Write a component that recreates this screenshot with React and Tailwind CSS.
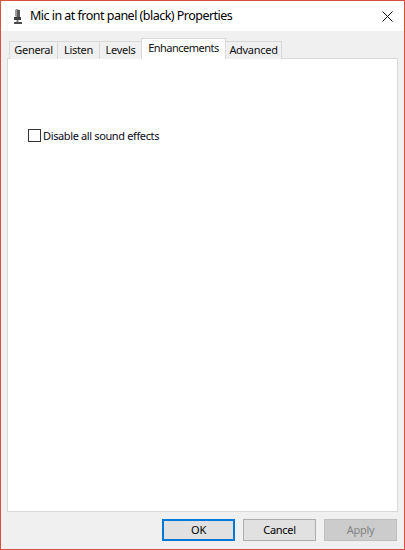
const tabs = [
  { label: 'General', width: 'w-[49px]' },
  { label: 'Listen', width: 'w-[43px]' },
  { label: 'Levels', width: 'w-[43px]' },
];

const MicIcon = () => (
  <svg width="10" height="15" viewBox="0 0 10 15" className="block">
    <rect x="2" y="0" width="4" height="8" rx="1.5" fill="#9a9a9a" />
    <rect x="4" y="1" width="3" height="8" fill="#5a5a5a" />
    <rect x="1" y="8" width="7" height="3" fill="#3f3f3f" />
    <rect x="3.5" y="11" width="2" height="2" fill="#7a7a7a" />
    <rect x="1" y="13" width="8" height="2" fill="#4a4a4a" />
  </svg>
);

const DialogButton = ({ children, className }) => (
  <button className={`w-[73px] h-[22px] flex items-center justify-center text-[11px] tracking-[-0.3px] ${className}`}>
    {children}
  </button>
);

export default function App() {
  return (
    <div className="w-[405px] h-[550px] flex flex-col border border-[#d8503f] bg-[#f0f0f0] text-black font-['Noto_Sans',sans-serif]">
      <div className="h-[30px] bg-white flex items-center shrink-0 pl-[12px] pr-[11px]">
        <MicIcon />
        <span className="ml-[7px] text-[12.5px] tracking-[-0.52px] leading-none">Mic in at front panel (black) Properties</span>
        <svg width="11" height="11" viewBox="0 0 11 11" className="ml-auto">
          <path d="M0.5 0.5L10.5 10.5M10.5 0.5L0.5 10.5" stroke="#111111" strokeWidth="1" fill="none" />
        </svg>
      </div>

      <div className="flex-1 flex flex-col pt-[7px]">
        <div className="h-[21px] flex items-end pl-[8px] shrink-0 relative z-10">
          {tabs.map((tab) => (
            <div
              key={tab.label}
              className={`${tab.width} h-[18px] -mr-px flex items-center justify-center text-[11px] tracking-[-0.3px] border border-b-0 border-[#d9d9d9] bg-[#f0f0f0] text-[#111111]`}
            >
              {tab.label}
            </div>
          ))}
          <div className="w-[85px] h-[21px] flex items-start pt-[1px] justify-center text-[11px] tracking-[-0.5px] border border-b-0 border-[#d9d9d9] bg-white text-[#111111]">
            Enhancements
          </div>
          <div className="w-[57px] h-[18px] -ml-px flex items-center justify-center text-[11px] tracking-[-0.3px] border border-b-0 border-[#d9d9d9] bg-[#f0f0f0] text-[#111111]">
            Advanced
          </div>
        </div>

        <div className="flex-1 mx-[6px] -mt-px bg-white border border-[#d9d9d9] pt-[70px] pl-[20px]">
          <label className="flex items-center">
            <span className="w-[13px] h-[13px] border border-[#333333] bg-white shrink-0" />
            <span className="ml-[2px] text-[11px] tracking-[-0.37px] leading-none text-[#0a0a1a]">Disable all sound effects</span>
          </label>
        </div>

        <div className="h-[37px] shrink-0 flex justify-end items-start gap-[8px] pt-[7px] pr-[7px]">
          <DialogButton className="border-2 border-[#0078d7] bg-[#e1e1e1]">OK</DialogButton>
          <DialogButton className="border border-[#adadad] bg-[#e1e1e1]">Cancel</DialogButton>
          <DialogButton className="border border-[#bfbfbf] bg-[#cccccc] text-[#838383]">Apply</DialogButton>
        </div>
      </div>
    </div>
  );
}
